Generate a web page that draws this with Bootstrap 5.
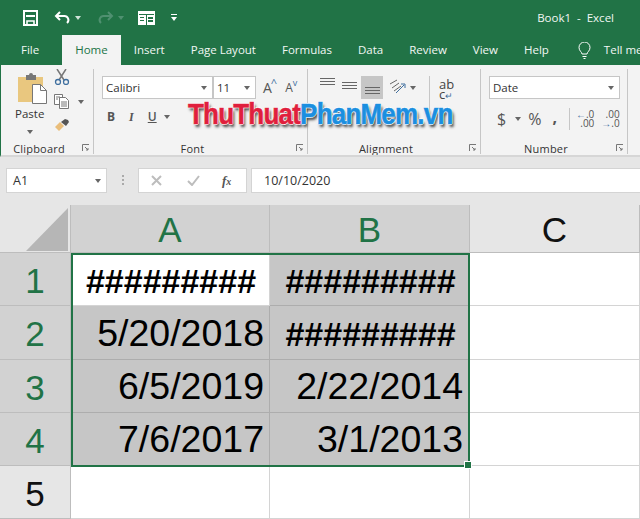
<!DOCTYPE html>
<html lang="en">
<head>
<meta charset="UTF-8">
<title>Book1 - Excel</title>
<link href="https://cdn.jsdelivr.net/npm/bootstrap@5.3.2/dist/css/bootstrap.min.css" rel="stylesheet">
<style>
html, body { height: 519px; overflow: hidden; }
body { font-family: "Open Sans", "Noto Sans", sans-serif; font-size: 11.5px; color: #333; background: #fff; }
.xl-top { background: #217346; color: #f2f7f4; }
.xl-title { height: 35px; padding-left: 23px; }
.xl-title .book { margin-left: auto; margin-right: 26px; font-size: 11.5px; word-spacing: 3px; }
.xl-tabs { height: 30px; padding-left: 8px; overflow: hidden; }
.xl-tab { padding: 0 13px; height: 30px; line-height: 30px; font-size: 11.5px; white-space: nowrap; }
.xl-tab.on { background: #f3f3f3; color: #217346; }
.xl-tab.file { margin-right: 10px; }
.xl-ribbon { height: 92px; background: #f3f3f3; border-left: 1px solid #217346; border-bottom: 2px solid #d6d6d6; position: relative; padding-top: 4px; overflow: hidden; }
.xl-group { height: 85px; border-right: 1px solid #c6c6c6; position: relative; flex: none; }
.xl-label { position: absolute; left: 0; right: 16px; bottom: -3px; text-align: center; font-size: 11px; line-height: 16px; letter-spacing: .2px; }
.launch { position: absolute; right: 4px; bottom: 3px; }
.xl-combo { height: 23px; background: #fff; border: 1px solid #c6c6c6; line-height: 21px; font-size: 11.5px; padding-left: 3px; position: relative; }
.xl-combo::after, .caret-s { content: ""; display: inline-block; border: 3px solid transparent; border-top: 4px solid #666; border-bottom: 0; }
.xl-combo::after { position: absolute; right: 5px; top: 9px; }
.wm { position: absolute; left: 187px; top: 31px; font: 700 30px/36px "Liberation Sans", sans-serif; letter-spacing: -.9px; white-space: nowrap; -webkit-text-stroke: .6px currentColor; text-shadow: 1px 0 #fff, -1px 0 #fff, 0 1px #fff, 0 -1px #fff, 2px 3px 3px #444; transform: scaleX(.866); transform-origin: left; z-index: 3; }
.wm .r { color: #e01f3d; }
.wm .b { color: #1b8fe0; }
.xl-formula { height: 48px; background: #e6e6e6; padding: 11px 0 0 6px; }
.xl-box { height: 25px; background: #fff; border: 1px solid #d4d4d4; line-height: 23px; font-size: 12.5px; }
.xl-sheet { display: grid; grid-template-columns: 71px 199px 200px 170px; grid-template-rows: 48px 53px 54px 53px 53px 53px; position: relative; font-family: "Liberation Sans", sans-serif; color: #000; }
.hd { background: #e6e6e6; border-right: 1px solid #bdbdbd; border-bottom: 1px solid #bdbdbd; font-size: 35px; display: flex; align-items: center; justify-content: center; color: #111; line-height: 1; padding-top: 2px; }
.hd.sel { background: #d2d2d2; color: #217346; }
.hd.corner { position: relative; }
.hd.corner svg { position: absolute; left: 26px; top: 3px; }
.cl { border-right: 1px solid #d4d4d4; border-bottom: 1px solid #d4d4d4; font-size: 37.5px; line-height: 1; display: flex; align-items: center; justify-content: flex-end; padding: 2px 6px 0 0; white-space: nowrap; }
.cl.col-a { padding-right: 5px; }
.cl.sel { background: #c6c6c6; border-color: #adadad; }
.cl.hash { font-size: 34px; justify-content: center; padding: 3px 0 0 2px; font-weight: 700; }
.selbox { position: absolute; left: 71px; top: 48px; width: 399px; height: 214px; border: 2px solid #217346; pointer-events: none; }
.selbox i { position: absolute; right: -4px; bottom: -4px; width: 6px; height: 6px; background: #217346; border: 1px solid #fff; box-sizing: content-box; }
.wrap-ic { font-size: 13px; line-height: 10px; color: #444; }
.dec { font-size: 10px; line-height: 9px; color: #555; text-align: right; }
</style>
</head>
<body>
<div class="xl-top">
  <div class="xl-title d-flex align-items-center">
    <svg width="15" height="16" viewBox="0 0 15 16" fill="none" stroke="#fff" stroke-width="2"><path d="M1 1h13v14H1z"/><path d="M3 6h9" /><path d="M4 15v-4h7v4" stroke-width="1.6"/></svg>
    <svg class="ms-3" width="17" height="14" viewBox="0 0 17 14" fill="none" stroke="#fff" stroke-width="2"><path d="M6 1L2 5l4 4"/><path d="M2 5h8a4 4 0 0 1 3 7"/></svg>
    <span class="caret-s ms-1" style="border-top-color:#cfe3d8"></span>
    <svg class="ms-3" width="17" height="14" viewBox="0 0 17 14" fill="none" stroke="#4f9070" stroke-width="2"><path d="M11 1l4 4-4 4"/><path d="M15 5H7a4 4 0 0 0-3 7"/></svg>
    <span class="caret-s ms-1" style="border-top-color:#4f9070"></span>
    <svg style="margin-left:14px" width="17" height="14" viewBox="0 0 17 14"><path fill="#fff" d="M0 0h17v14H0z"/><path fill="#217346" d="M1 3h15v1H1zM8 3h1v11H8zM2 6h4v1H2zM2 9h4v1H2zM10 6h5v2h-5zM10 9h5v2h-5z"/></svg>
    <span class="d-inline-flex flex-column align-items-center" style="margin-left:16px;gap:2px"><span style="width:6px;height:1px;background:#fff"></span><span class="caret-s" style="border-top-color:#fff"></span></span>
    <span class="book">Book1 - Excel</span>
  </div>
  <div class="xl-tabs d-flex">
    <div class="xl-tab file">File</div>
    <div class="xl-tab on">Home</div>
    <div class="xl-tab">Insert</div>
    <div class="xl-tab">Page Layout</div>
    <div class="xl-tab">Formulas</div>
    <div class="xl-tab">Data</div>
    <div class="xl-tab">Review</div>
    <div class="xl-tab">View</div>
    <div class="xl-tab">Help</div>
    <div class="xl-tab" style="padding:0 13px 0 16px"><svg width="13" height="17" viewBox="0 0 13 17" fill="none" stroke="#fff"><path d="M4 12c0-2-3-3-3-6.500a5.500 5.500 0 0 1 11 0C12 9 9 10 9 12z"/><path d="M4.500 14.500h4M5.500 16.500h2"/></svg></div>
    <div class="xl-tab" style="padding:0">Tell me</div>
  </div>
</div>

<div class="xl-ribbon d-flex">
  <div class="xl-group d-flex" style="width:93px">
    <div style="width:53px;padding:4px 0 0 17px">
      <svg width="30" height="31" viewBox="0 0 30 31"><path fill="#e9c77f" d="M0 4h25v25H0z"/><path fill="#777" d="M8 2h3a2 2 0 0 1 4 0h3v5H8z"/><path fill="#fff" stroke="#777" d="M14.500 11.500h8l6 6v13h-14z"/><path fill="none" stroke="#777" d="M22.500 11.500v6h6"/></svg>
      <div style="margin:2px 0 0 -3px;line-height:15px;font-size:11.5px">Paste</div>
      <span class="caret-s" style="margin-left:9px"></span>
    </div>
    <div class="d-flex flex-column" style="gap:9px">
      <svg width="16" height="16" viewBox="0 0 16 16" fill="none"><path stroke="#777" stroke-width="1.500" d="M3 0l7 11M12 0L5 11"/><circle cx="4" cy="13" r="2.500" stroke="#3f6f9f" stroke-width="1.300"/><circle cx="12" cy="13" r="2.500" stroke="#3f6f9f" stroke-width="1.300"/></svg>
      <div class="d-flex align-items-center gap-2">
        <svg width="16" height="15" viewBox="0 0 16 15" fill="#fff" stroke="#777"><path d="M.500.500h8v10h-8z"/><path d="M5.500 3.500h6l3 3v8h-9z"/><path d="M7 8h6M7 10h6M7 12h6M2 3h4M2 5h2"/></svg>
        <span class="caret-s"></span>
      </div>
      <svg width="16" height="14" viewBox="0 0 16 14"><path fill="#e9bd7a" d="M1 9l5-5 4 4-5 5z"/><path fill="#555" d="M7 4l4-3 3 1 1 2-3 4z"/></svg>
    </div>
    <div class="xl-label">Clipboard</div>
    <svg class="launch" width="7" height="7" viewBox="0 0 7 7" fill="none" stroke="#777"><path d="M.500 7V.500H7M3 3l3 3M6 4v2H4"/></svg>
  </div>

  <div class="xl-group" style="width:214px;padding:7px 0 0 8px">
    <div class="d-flex align-items-center">
      <div class="xl-combo" style="width:111px">Calibri</div>
      <div class="xl-combo" style="width:43px">11</div>
      <span style="font-size:14px;color:#555;margin-left:7px">A</span>
      <span style="font-size:11px;color:#3f6f9f;margin:-8px 0 0 -1px">^</span>
      <span style="font-size:12px;color:#555;margin-left:8px">A</span>
      <span style="font-size:9px;color:#3f6f9f;margin:-10px 0 0 0">v</span>
    </div>
    <div class="d-flex align-items-center" style="margin-top:9px;padding-left:5px;gap:14px;font-size:12px;color:#555">
      <b>B</b><i style="font-family:'Liberation Serif',serif;font-weight:700">I</i><u style="font-weight:600">U</u><span class="caret-s" style="margin-left:-7px"></span>
    </div>
    <div class="xl-label">Font</div>
    <svg class="launch" width="7" height="7" viewBox="0 0 7 7" fill="none" stroke="#777"><path d="M.500 7V.500H7M3 3l3 3M6 4v2H4"/></svg>
  </div>

  <div class="xl-group" style="width:173px;padding:7px 0 0 12px">
    <div class="d-flex align-items-start">
      <svg style="margin-top:2px" width="15" height="8" viewBox="0 0 15 8" stroke="#666"><path d="M0 .500h15M0 3.500h15M0 6.500h15"/></svg>
      <svg style="margin:6px 0 0 7px" width="15" height="8" viewBox="0 0 15 8" stroke="#666"><path d="M0 .500h15M0 3.500h15M0 6.500h15"/></svg>
      <div class="d-flex justify-content-center" style="margin-left:4px;width:22px;height:23px;background:#c6c6c6;padding-top:11px"><svg width="15" height="8" viewBox="0 0 15 8" stroke="#666"><path d="M0 .500h15M0 3.500h15M0 6.500h15"/></svg></div>
      <svg style="margin:3px 0 0 6px" width="17" height="16" viewBox="0 0 17 16" fill="none" stroke="#666"><path d="M1 5l7-4M3 9l7-5M5 12l7-5" /><path stroke="#3f6f9f" d="M7 14l8-8M12 5h4v4"/></svg>
      <span class="caret-s" style="margin:10px 0 0 4px"></span>
      <div style="width:1px;height:48px;background:#c6c6c6;margin-left:13px"></div>
      <div class="wrap-ic" style="margin:3px 0 0 9px">ab<br>c<span style="color:#3f6f9f;font-size:9px">↵</span></div>
    </div>
    <div class="xl-label">Alignment</div>
    <svg class="launch" width="7" height="7" viewBox="0 0 7 7" fill="none" stroke="#777"><path d="M.500 7V.500H7M3 3l3 3M6 4v2H4"/></svg>
  </div>

  <div class="xl-group" style="width:147px;padding:7px 0 0 8px">
    <div class="xl-combo" style="width:131px">Date</div>
    <div class="d-flex align-items-center" style="margin-top:9px;padding-left:8px;color:#555">
      <span style="font-size:16px;line-height:22px">$</span>
      <span class="caret-s" style="margin-left:9px"></span>
      <span style="font-size:16px;line-height:22px;margin-left:7px">%</span>
      <b style="font-size:16px;line-height:22px;margin-left:11px;margin-top:-4px">,</b>
      <div style="width:1px;height:22px;background:#c6c6c6;margin-left:12px"></div>
      <div class="dec" style="margin-left:6px"><span style="color:#3f6f9f">←</span>.0<br>.00</div>
      <div class="dec" style="margin-left:7px">.00<br><span style="color:#3f6f9f">→</span>.0</div>
    </div>
    <div class="xl-label">Number</div>
    <svg class="launch" width="7" height="7" viewBox="0 0 7 7" fill="none" stroke="#777"><path d="M.500 7V.500H7M3 3l3 3M6 4v2H4"/></svg>
  </div>
  <div class="wm"><span class="r">ThuThuat</span><span class="b">PhanMem.vn</span></div>
</div>

<div class="xl-formula d-flex">
  <div class="xl-box d-flex align-items-center" style="width:101px;padding-left:6px">A1<span class="caret-s ms-auto" style="margin-right:5px"></span></div>
  <div class="d-flex flex-column align-items-center" style="width:31px;gap:2px;padding-top:7px"><span style="width:2px;height:2px;background:#aaa"></span><span style="width:2px;height:2px;background:#aaa"></span><span style="width:2px;height:2px;background:#aaa"></span></div>
  <div class="xl-box d-flex align-items-center" style="width:109px;padding-left:12px">
    <svg width="11" height="11" viewBox="0 0 11 11" stroke="#bdbdbd" stroke-width="2"><path d="M1 1l9 9M10 1l-9 9"/></svg>
    <svg style="margin-left:25px" width="13" height="11" viewBox="0 0 13 11" fill="none" stroke="#bdbdbd" stroke-width="2"><path d="M1 6l4 4 7-9"/></svg>
    <i style="margin-left:22px;font:italic 700 13px 'Liberation Serif',serif;color:#555">f<span style="font-size:10px">x</span></i>
  </div>
  <div class="xl-box flex-grow-1" style="margin-left:4px;padding-left:12px;border-right:0">10/10/2020</div>
</div>

<div class="xl-sheet">
  <div class="hd corner"><svg width="42" height="43" viewBox="0 0 42 43"><path fill="#b6b6b6" d="M42 0v43H0z"/></svg></div>
  <div class="hd sel">A</div><div class="hd sel">B</div><div class="hd">C</div>

  <div class="hd sel">1</div><div class="cl hash">#########</div><div class="cl hash sel">#########</div><div class="cl"></div>
  <div class="hd sel">2</div><div class="cl col-a sel">5/20/2018</div><div class="cl hash sel">#########</div><div class="cl"></div>
  <div class="hd sel">3</div><div class="cl col-a sel">6/5/2019</div><div class="cl sel">2/22/2014</div><div class="cl"></div>
  <div class="hd sel">4</div><div class="cl col-a sel">7/6/2017</div><div class="cl sel">3/1/2013</div><div class="cl"></div>
  <div class="hd">5</div><div class="cl"></div><div class="cl"></div><div class="cl"></div>
  <div class="selbox"><i></i></div>
</div>
</body>
</html>
